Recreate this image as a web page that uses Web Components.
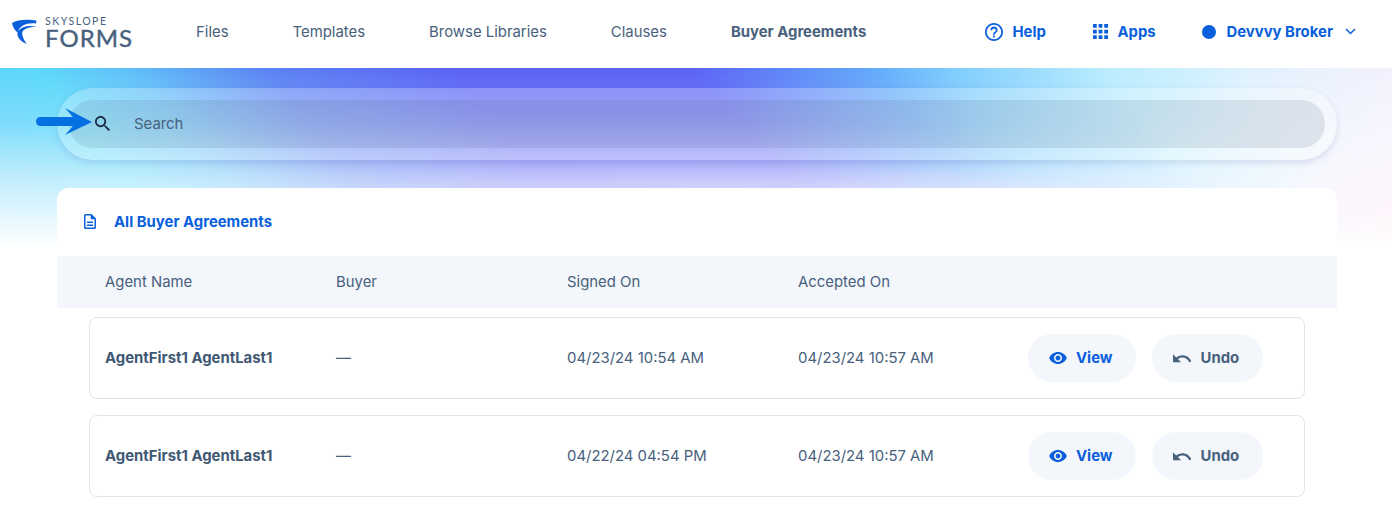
<!DOCTYPE html>
<html>
<head>
<meta charset="utf-8">
<title>Buyer Agreements</title>
<style>
  html, body { margin: 0; background: #fff; }
  body { font-family: "Inter", "Liberation Sans", sans-serif; font-size: 14.9px; color: #3f5873; overflow: hidden; height: 505px; }
</style>
</head>
<body>
<sl-header></sl-header>
<sl-main>
  <sl-search placeholder="Search"></sl-search>
  <sl-card heading="All Buyer Agreements">
    <sl-row agent="AgentFirst1 AgentLast1" buyer="—" signed="04/23/24 10:54 AM" accepted="04/23/24 10:57 AM"></sl-row>
    <sl-row agent="AgentFirst1 AgentLast1" buyer="—" signed="04/22/24 04:54 PM" accepted="04/23/24 10:57 AM"></sl-row>
  </sl-card>
</sl-main>

<script>
const headerTemplate = document.createElement("template");
headerTemplate.innerHTML = `<style>
  :host { display: flex; align-items: center; height: 63px; background: #fff; padding: 0 36px 5px 12px; position: relative; z-index: 1; }
  .logo { display: flex; align-items: center; gap: 8px; width: 184px; }
  .word { display: flex; flex-direction: column; color: #48617d; font-family: "Lato", sans-serif; margin-top: 3px; }
  .sky { font-size: 10.5px; letter-spacing: 1.5px; line-height: 9px; }
  .forms { font-size: 24px; line-height: 23px; letter-spacing: 1px; -webkit-text-stroke: .4px #48617d; }
  nav { display: flex; gap: 64px; flex: 1; }
  nav a { color: #48617d; }
  nav a.on { font-weight: 700; }
  .right { display: flex; align-items: center; color: #0a5fdc; font-weight: 700; }
  .item { display: flex; align-items: center; }
  svg { display: block; fill: #0a5fdc; }
</style>
<div class="logo">
  <svg width="25" height="25" viewBox="0 0 25 25"><path d="M0 4C5 1 14 0 24.500 1.500L24 4.500C15 3.500 8 6 5.500 13.500 2.500 11 .5 7.500 0 4z"/><path d="M24.500 8C17 7.500 12 10 10.500 12.500 9.500 15 11 20 15 25 9 23 4.500 18 5.500 13.500 7.500 8.500 16 5.500 24.500 8z"/></svg>
  <div class="word"><span class="sky">SKYSLOPE</span><span class="forms">FORMS</span></div>
</div>
<nav><a>Files</a><a>Templates</a><a>Browse Libraries</a><a>Clauses</a><a class="on">Buyer Agreements</a></nav>
<div class="right">
  <div class="item" style="gap:9px;width:108px">
    <svg width="18" height="18" viewBox="2 2 20 20"><path d="M11 18h2v-2h-2v2zm1-16C6.480 2 2 6.480 2 12s4.480 10 10 10 10-4.480 10-10S17.520 2 12 2zm0 18c-4.410 0-8-3.590-8-8s3.590-8 8-8 8 3.590 8 8-3.590 8-8 8zm0-14c-2.210 0-4 1.790-4 4h2c0-1.100.9-2 2-2s2 .9 2 2c0 2-3 1.750-3 5h2c0-2.250 3-2.500 3-5 0-2.210-1.790-4-4-4z"/></svg>
    <span>Help</span>
  </div>
  <div class="item" style="gap:9px;width:109px">
    <svg width="15" height="15" viewBox="4 4 16 16"><path d="M4 8h4V4H4v4zm6 12h4v-4h-4v4zm-6 0h4v-4H4v4zm0-6h4v-4H4v4zm6 0h4v-4h-4v4zm6-10v4h4V4h-4zm-6 4h4V4h-4v4zm6 6h4v-4h-4v4zm0 6h4v-4h-4v4z"/></svg>
    <span>Apps</span>
  </div>
  <div class="item" style="gap:10px">
    <svg width="14" height="14" viewBox="0 0 14 14"><circle cx="7" cy="7" r="7"/></svg>
    <span>Devvvy Broker</span>
    <svg style="margin-left:2px" width="11" height="7" viewBox="0 0 11 7" fill="none"><path fill="none" stroke="#0a5fdc" stroke-width="1.500" d="M1 1l4.500 4.500L10 1"/></svg>
  </div>
</div>`;

class SlHeader extends HTMLElement {
  constructor() {
    super();
    this.attachShadow({mode: "open"}).append(headerTemplate.content.cloneNode(true));
  }
}
customElements.define("sl-header", SlHeader);

const mainTemplate = document.createElement("template");
mainTemplate.innerHTML = `<style>
  :host { display: block; position: relative; padding: 20px 55px 0 57px; }
  .hero { position: absolute; left: 0; right: 0; top: 0; height: 180px;
    background:
      linear-gradient(to bottom, rgba(255,255,255,0) 0, rgba(255,255,255,.2) 56px, rgba(255,255,255,.62) 112px, #fff 180px),
      radial-gradient(ellipse 260px 90px at 1392px 70px, rgba(248,244,254,.8), rgba(248,244,254,0)),
      radial-gradient(ellipse 500px 90px at 720px 180px, rgba(176,150,255,.9), rgba(176,150,255,0)),
      radial-gradient(ellipse 360px 90px at 1060px 180px, rgba(190,170,255,.9), rgba(190,170,255,0)),
      radial-gradient(ellipse 130px 100px at 1392px 160px, #ffc8ea, rgba(255,200,234,0)),
      linear-gradient(50deg, #66cefb 0%, #5cd8fb 12%, #5fc0f9 18%, #5b82f3 27%, #5a63f5 39%, #5a63f5 54.600%, #62aafb 66.300%, #7bcbfd 71%, #b9ecfe 81.200%, #dcf2fe 90%, #f2f0fc 100%); }
  .arrow { position: absolute; left: 36px; top: 39px; }
  .body { position: relative; display: flex; flex-direction: column; gap: 28px; }
</style>
<div class="hero"></div>
<div class="body"><slot></slot></div>
<svg class="arrow" width="57" height="30" viewBox="0 0 57 30"><path fill="#0470e2" d="M29 1 56 15 29 28 37 19H4.500a4.500 4.500 0 0 1 0-9H37z"/></svg>`;

class SlMain extends HTMLElement {
  constructor() {
    super();
    this.attachShadow({mode: "open"}).append(mainTemplate.content.cloneNode(true));
  }
}
customElements.define("sl-main", SlMain);

const searchTemplate = document.createElement("template");
searchTemplate.innerHTML = `<style>
  :host { display: block; padding: 12px; border-radius: 36px; background: rgba(255,255,255,.25); box-shadow: 0 3px 7px rgba(60,60,140,.14); }
  .box { display: flex; align-items: center; height: 48px; border-radius: 24px; background: rgba(63,88,115,.13); padding: 0 0 1px 26px; box-sizing: border-box; color: #48617d; }
  svg { display: block; margin-right: 24px; fill: #17293d; }
</style>
<div class="box">
  <svg width="15" height="15" viewBox="3 3 17.500 17.500"><path d="M15.500 14h-.79l-.28-.27C15.410 12.590 16 11.110 16 9.500 16 5.910 13.090 3 9.500 3S3 5.910 3 9.500 5.910 16 9.500 16c1.610 0 3.090-.59 4.230-1.570l.27.28v.79l5 4.990L20.490 19l-4.990-5zm-6 0C7.010 14 5 11.990 5 9.500S7.010 5 9.500 5 14 7.010 14 9.500 11.990 14 9.500 14z"/></svg>
  <span id="label"></span>
</div>`;

class SlSearch extends HTMLElement {
  constructor() {
    super();
    const root = this.attachShadow({mode: "open"});
    root.append(searchTemplate.content.cloneNode(true));
    root.getElementById("label").textContent = this.getAttribute("placeholder");
  }
}
customElements.define("sl-search", SlSearch);

const cardTemplate = document.createElement("template");
cardTemplate.innerHTML = `<style>
  :host { display: block; background: #fff; border-radius: 12px 12px 0 0; }
  .title { display: flex; align-items: center; gap: 18px; height: 67px; padding: 0 0 1px 27px; color: #0a5fdc; font-weight: 700; }
  svg { display: block; fill: #0a5fdc; }
  .cols { display: grid; grid-template-columns: repeat(4, 231px); align-items: center; height: 51px; padding: 0 0 1px 48px; background: #f3f6fb; color: #48617d; }
  .rows { display: flex; flex-direction: column; gap: 16px; padding: 9px 32px 0; }
</style>
<div class="title">
  <svg width="12" height="15" viewBox="4 2 16 20"><path d="M8 16h8v2H8zm0-4h8v2H8zm6-10H6c-1.100 0-2 .9-2 2v16c0 1.100.89 2 1.990 2H18c1.100 0 2-.9 2-2V8l-6-6zm4 18H6V4h7v5h5v11z"/></svg>
  <span id="heading"></span>
</div>
<div class="cols"><span>Agent Name</span><span>Buyer</span><span>Signed On</span><span>Accepted On</span></div>
<div class="rows"><slot></slot></div>`;

class SlCard extends HTMLElement {
  constructor() {
    super();
    const root = this.attachShadow({mode: "open"});
    root.append(cardTemplate.content.cloneNode(true));
    root.getElementById("heading").textContent = this.getAttribute("heading");
  }
}
customElements.define("sl-card", SlCard);

const pillTemplate = document.createElement("template");
pillTemplate.innerHTML = `<style>
  :host { display: inline-flex; align-items: center; gap: 9px; height: 48px; padding: 0 24px 0 21px; border-radius: 24px; background: #f3f6fb; font-weight: 700; }
  ::slotted(svg) { display: block; }
</style>
<slot name="icon"></slot><slot></slot>`;

class SlPill extends HTMLElement {
  constructor() {
    super();
    this.attachShadow({mode: "open"}).append(pillTemplate.content.cloneNode(true));
  }
}
customElements.define("sl-pill", SlPill);

const rowTemplate = document.createElement("template");
rowTemplate.innerHTML = `<style>
  :host { display: grid; grid-template-columns: repeat(4, 231px) auto; align-items: center; height: 80px; padding-left: 15px; border: 1px solid #e0e4ee; border-radius: 8px; color: #48617d; }
  .agent { font-weight: 700; color: #3f5873; }
  .acts { display: flex; gap: 16px; margin-left: -1px; }
  .view { color: #0a5fdc; }
  .undo { color: #48617d; }
  span { margin-bottom: 1px; }
</style>
<span class="agent" id="agent"></span><span id="buyer"></span><span id="signed"></span><span id="accepted"></span>
<div class="acts">
  <sl-pill class="view"><svg slot="icon" width="18" height="12" viewBox="1 4.500 22 15" fill="#0a5fdc"><path d="M12 4.500C7 4.500 2.730 7.610 1 12c1.730 4.390 6 7.500 11 7.500s9.270-3.110 11-7.500c-1.730-4.390-6-7.500-11-7.500zM12 17c-2.760 0-5-2.240-5-5s2.240-5 5-5 5 2.240 5 5-2.240 5-5 5zm0-8c-1.660 0-3 1.340-3 3s1.340 3 3 3 3-1.340 3-3-1.340-3-3-3z"/></svg>View</sl-pill>
  <sl-pill class="undo"><svg slot="icon" width="18" height="9" viewBox="2 7 20 9.500" fill="#48617d"><path d="M12.500 8c-2.650 0-5.050.99-6.900 2.600L2 7v9h9l-3.620-3.620c1.390-1.160 3.160-1.880 5.120-1.880 3.540 0 6.550 2.310 7.600 5.500l2.370-.78C21.080 11.030 17.150 8 12.500 8z"/></svg>Undo</sl-pill>
</div>`;

class SlRow extends HTMLElement {
  constructor() {
    super();
    const root = this.attachShadow({mode: "open"});
    root.append(rowTemplate.content.cloneNode(true));
    ["agent", "buyer", "signed", "accepted"].forEach(k => {
      root.getElementById(k).textContent = this.getAttribute(k);
    });
  }
}
customElements.define("sl-row", SlRow);
</script>
</body>
</html>
